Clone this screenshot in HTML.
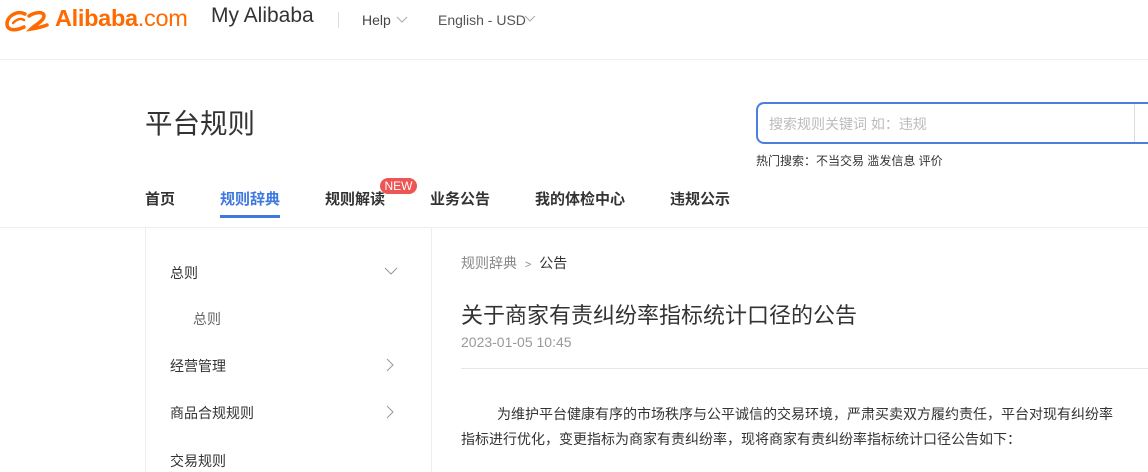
<!DOCTYPE html>
<html><head><meta charset="utf-8"><style>
*{margin:0;padding:0;box-sizing:border-box}
body{width:1148px;height:472px;overflow:hidden;background:#fff;font-family:"Liberation Sans","Noto Sans CJK SC",sans-serif;color:#333;position:relative}
.a{position:absolute;white-space:nowrap}
</style></head><body>
<svg class="a" style="left:4px;top:8px" width="48" height="26" viewBox="0 0 48 26">
<path d="M21 6 C13 2 3 8 3 16 C3 23 12 23 20 19" stroke="#ff6a00" stroke-width="3.5" fill="none" stroke-linecap="round"/>
<path d="M9 15 C13 11 17 10 20 12" stroke="#ff6a00" stroke-width="2.5" fill="none" stroke-linecap="round"/>
<path d="M25 8 C31 4 40 3 40 8 C40 13 31 17 27 21 C33 20 38 19 43 17" stroke="#ff6a00" stroke-width="3.5" fill="none" stroke-linecap="round"/>
</svg>
<div class="a" style="left:55px;top:5px;font-size:23.5px;color:#ff6a00;letter-spacing:-0.3px"><b>Alibaba</b>.com</div>
<div class="a" style="left:211px;top:4px;font-size:21px;color:#333">My Alibaba</div>
<div class="a" style="left:338px;top:12px;width:1px;height:16px;background:#ddd"></div>
<div class="a" style="left:362px;top:12px;font-size:14px;color:#444">Help</div>
<svg class="a" style="left:396px;top:16px" width="12" height="8"><path d="M1 1 L6 6 L11 1" stroke="#aaa" fill="none"/></svg>
<div class="a" style="left:438px;top:12px;font-size:14px;color:#555">English - USD</div>
<svg class="a" style="left:524px;top:15px" width="12" height="8"><path d="M1 1 L6 6 L11 1" stroke="#aaa" fill="none"/></svg>
<div class="a" style="left:0;top:59px;width:1148px;height:1px;background:#eee"></div>
<div class="a" style="left:145px;top:101px;font-size:27.5px;color:#333">平台规则</div>
<div class="a" style="left:756px;top:102px;width:420px;height:42px;border:2px solid #4a7fe0;border-radius:8px"></div>
<div class="a" style="left:1134px;top:104px;width:1px;height:38px;background:#ddd"></div>
<div class="a" style="left:769px;top:114px;font-size:14px;color:#bbb">搜索规则关键词 如：违规</div>
<div class="a" style="left:756px;top:152px;font-size:12px;color:#333">热门搜索：不当交易 滥发信息 评价</div>
<div class="a" style="left:145px;top:188px;font-size:15px;color:#333;font-weight:bold">首页</div>
<div class="a" style="left:220px;top:188px;font-size:15px;color:#3f78e0;font-weight:bold">规则辞典</div>
<div class="a" style="left:220px;top:215px;width:60px;height:3px;background:#3f78e0"></div>
<div class="a" style="left:325px;top:188px;font-size:15px;color:#333;font-weight:bold">规则解读</div>
<div class="a" style="left:380px;top:178px;width:37px;height:16px;background:#e55;border-radius:8px;color:#fff;font-size:12px;text-align:center;line-height:16px">NEW</div>
<div class="a" style="left:430px;top:188px;font-size:15px;color:#333;font-weight:bold">业务公告</div>
<div class="a" style="left:535px;top:188px;font-size:15px;color:#333;font-weight:bold">我的体检中心</div>
<div class="a" style="left:670px;top:188px;font-size:15px;color:#333;font-weight:bold">违规公示</div>
<div class="a" style="left:0;top:227px;width:1148px;height:1px;background:#eee"></div>
<div class="a" style="left:145px;top:228px;width:1px;height:244px;background:#eee"></div>
<div class="a" style="left:431px;top:228px;width:1px;height:244px;background:#eee"></div>
<div class="a" style="left:170px;top:263px;font-size:14px;color:#333">总则</div>
<svg class="a" style="left:384px;top:267px" width="14" height="9"><path d="M1 1 L7 7 L13 1" stroke="#999" fill="none"/></svg>
<div class="a" style="left:193px;top:309px;font-size:14px;color:#666">总则</div>
<div class="a" style="left:170px;top:356px;font-size:14px;color:#333">经营管理</div>
<svg class="a" style="left:386px;top:358px" width="9" height="14"><path d="M1 1 L7 7 L1 13" stroke="#999" fill="none"/></svg>
<div class="a" style="left:170px;top:403px;font-size:14px;color:#333">商品合规规则</div>
<svg class="a" style="left:386px;top:405px" width="9" height="14"><path d="M1 1 L7 7 L1 13" stroke="#999" fill="none"/></svg>
<div class="a" style="left:170px;top:451px;font-size:14px;color:#333">交易规则</div>
<div class="a" style="left:461px;top:253px;font-size:14px;color:#888">规则辞典 <span style="font-size:11px;margin:0 4px">&gt;</span> <span style="color:#333">公告</span></div>
<div class="a" style="left:461px;top:298px;font-size:22px;color:#333">关于商家有责纠纷率指标统计口径的公告</div>
<div class="a" style="left:461px;top:334px;font-size:14px;color:#999">2023-01-05 10:45</div>
<div class="a" style="left:461px;top:368px;width:687px;height:1px;background:#e6e6e6"></div>
<div class="a" style="left:497px;top:404px;font-size:14px;color:#333">为维护平台健康有序的市场秩序与公平诚信的交易环境，严肃买卖双方履约责任，平台对现有纠纷率</div>
<div class="a" style="left:461px;top:429px;font-size:14px;color:#333">指标进行优化，变更指标为商家有责纠纷率，现将商家有责纠纷率指标统计口径公告如下：</div>
</body></html>
